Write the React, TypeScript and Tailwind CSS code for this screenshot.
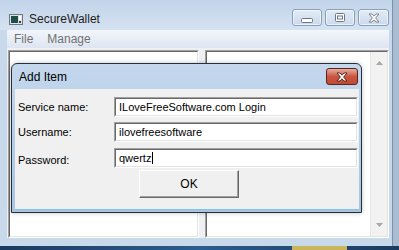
import React from "react";

function WalletIcon() {
	return (
		<svg width="14" height="11" viewBox="0 0 14 11" className="shrink-0">
			<rect x="0.5" y="0.5" width="13" height="10" fill="#dfe3e6" stroke="#6f7880" />
			<rect x="2" y="2" width="7" height="7" fill="#1f4d48" />
			<rect x="10" y="2" width="2" height="4" fill="#ffffff" />
			<rect x="10" y="7" width="2" height="2" fill="#3b3b3b" />
		</svg>
	);
}

function CaptionButton({ kind, wide }: { kind: "min" | "max" | "close"; wide?: boolean }) {
	return (
		<div
			className={`flex h-[17px] ${wide ? "w-[31px]" : "w-[30px]"} items-center justify-center rounded-[3px] border border-[#8a9fb9] bg-gradient-to-b from-[#e3ecf6] to-[#cbdaec] shadow-[inset_0_0_0_1px_rgba(255,255,255,0.6)]`}
		>
			{kind === "min" && (
				<svg width="12" height="5" viewBox="0 0 12 5" className="mt-[5px]">
					<rect x="0.5" y="0.5" width="11" height="4" rx="1" fill="#fff" stroke="#6b7785" />
				</svg>
			)}
			{kind === "max" && (
				<svg width="10" height="9" viewBox="0 0 10 9">
					<rect x="0.5" y="0.5" width="9" height="8" rx="1" fill="#fff" stroke="#6b7785" />
					<rect x="2.5" y="3" width="5" height="3" fill="#fff" stroke="#6b7785" />
				</svg>
			)}
			{kind === "close" && (
				<svg width="12" height="10" viewBox="0 0 12 10">
					<path
						d="M1 1h3l2 2.2L8 1h3L7.6 5 11 9H8L6 6.8 4 9H1l3.4-4z"
						fill="#fff"
						stroke="#6b7785"
						strokeWidth="0.9"
						strokeLinejoin="round"
					/>
				</svg>
			)}
		</div>
	);
}

function Sunken({ className, children }: { className?: string; children?: React.ReactNode }) {
	return (
		<div className={`border border-t-[#a0a0a0] border-l-[#a0a0a0] border-b-white border-r-white ${className ?? ""}`}>
			<div className="flex h-full w-full border border-t-[#696969] border-l-[#696969] border-b-[#e3e3e3] border-r-[#e3e3e3] bg-white">
				{children}
			</div>
		</div>
	);
}

function Field({ value, caret }: { value: string; caret?: boolean }) {
	return (
		<Sunken className="h-[20px] w-[244px]">
			<div className="flex items-center pl-[3px] text-[11px] text-black">
				<span>{value}</span>
				{caret && <span className="ml-px h-[12px] w-px bg-black" />}
			</div>
		</Sunken>
	);
}

export default function App() {
	return (
		<div className="relative flex h-[250px] w-[399px] flex-col overflow-hidden bg-[#a9bcd2] font-['Liberation_Sans',Arial,sans-serif]">
			{/* main window */}
			<div className="flex h-[246px] w-[393px] flex-col border-r border-[#7d91aa] bg-[#c9d9ec]">
				<div className="flex h-[30px] items-start bg-gradient-to-b from-[#c2d4ea] to-[#d5e2f1] pl-[9px] pr-[3px]">
					<div className="mt-[10px] flex items-center">
						<WalletIcon />
						<span className="ml-[6px] text-[12px] text-[#1e1e1e]">SecureWallet</span>
					</div>
					<div className="ml-auto mt-[9px] flex gap-[3px]">
						<CaptionButton kind="min" />
						<CaptionButton kind="max" />
						<CaptionButton kind="close" wide />
					</div>
				</div>

				<div className="flex flex-1 flex-col pb-[8px] pl-[7px] pr-[3px]">
					<div className="flex h-[18px] items-center gap-[14px] bg-gradient-to-b from-[#f3f6fb] to-[#dde5f2] px-[7px] text-[12px] text-[#727272]">
						<span>File</span>
						<span>Manage</span>
					</div>
					<div className="flex flex-1 gap-[6px] bg-[#eef0f3] pl-px pt-[2px]">
						<Sunken className="w-[191px]" />
						<Sunken className="flex-1">
							<div className="flex-1" />
							<div className="flex w-[17px] flex-col items-center justify-between border-l border-[#e6e6e6] bg-[#f2f2f2] py-[9px]">
								<svg width="7" height="4" viewBox="0 0 7 4">
									<path d="M0 4L3.5 0 7 4z" fill="#a8a8a8" />
								</svg>
								<svg width="7" height="4" viewBox="0 0 7 4">
									<path d="M0 0h7L3.5 4z" fill="#a8a8a8" />
								</svg>
							</div>
						</Sunken>
					</div>
				</div>
			</div>

			{/* taskbar strip */}
			<div className="flex h-[4px] bg-gradient-to-r from-[#1b3a60] via-[#2d5d8c] to-[#1b3a60]">
				<div className="ml-[292px] w-[55px] bg-[#c9b65a]" />
			</div>

			{/* modal dialog */}
			<div className="absolute left-[11px] top-[63px] flex h-[150px] w-[351px] flex-col rounded-t-[6px] border border-[#22313f] bg-gradient-to-b from-[#c4d7ed] to-[#a9c3e1] pb-[2px] pl-[3px] pr-[2px] shadow-[0_0_4px_rgba(0,0,0,0.25)]">
				<div className="flex h-[25px] items-center pl-[4px] pr-px">
					<span className="text-[12px] text-black">Add Item</span>
					<div className="ml-auto flex h-[17px] w-[32px] items-center justify-center rounded-[3px] border border-[#5a241c] bg-gradient-to-b from-[#e6ada1] via-[#c9543f] to-[#c04a35]">
						<svg width="12" height="10" viewBox="0 0 12 10">
							<path
								d="M1 1h3l2 2.2L8 1h3L7.6 5 11 9H8L6 6.8 4 9H1l3.4-4z"
								fill="#fff"
								stroke="#4a1d16"
								strokeWidth="0.9"
								strokeLinejoin="round"
							/>
						</svg>
					</div>
				</div>
				<div className="flex flex-1 flex-col border-b border-[#86c3d6] bg-[#f0f0f0] pt-[8px] text-[11px] text-black">
					<div className="flex items-center">
						<span className="w-[99px] pl-[3px]">Service name:</span>
						<Field value="ILoveFreeSoftware.com Login" />
					</div>
					<div className="mt-[5px] flex items-center">
						<span className="w-[99px] pl-[3px]">Username:</span>
						<Field value="ilovefreesoftware" />
					</div>
					<div className="mt-[6px] flex items-center">
						<span className="w-[99px] translate-y-[2px] pl-[3px]">Password:</span>
						<Field value="qwertz" caret />
					</div>
					<div className="ml-[124px] mt-[2px] flex h-[28px] w-[100px] items-center justify-center border border-b-[#696969] border-l-white border-r-[#696969] border-t-white bg-[#f0f0f0] text-[12px] shadow-[inset_-1px_-1px_0_#a0a0a0]">
						OK
					</div>
				</div>
			</div>
		</div>
	);
}
